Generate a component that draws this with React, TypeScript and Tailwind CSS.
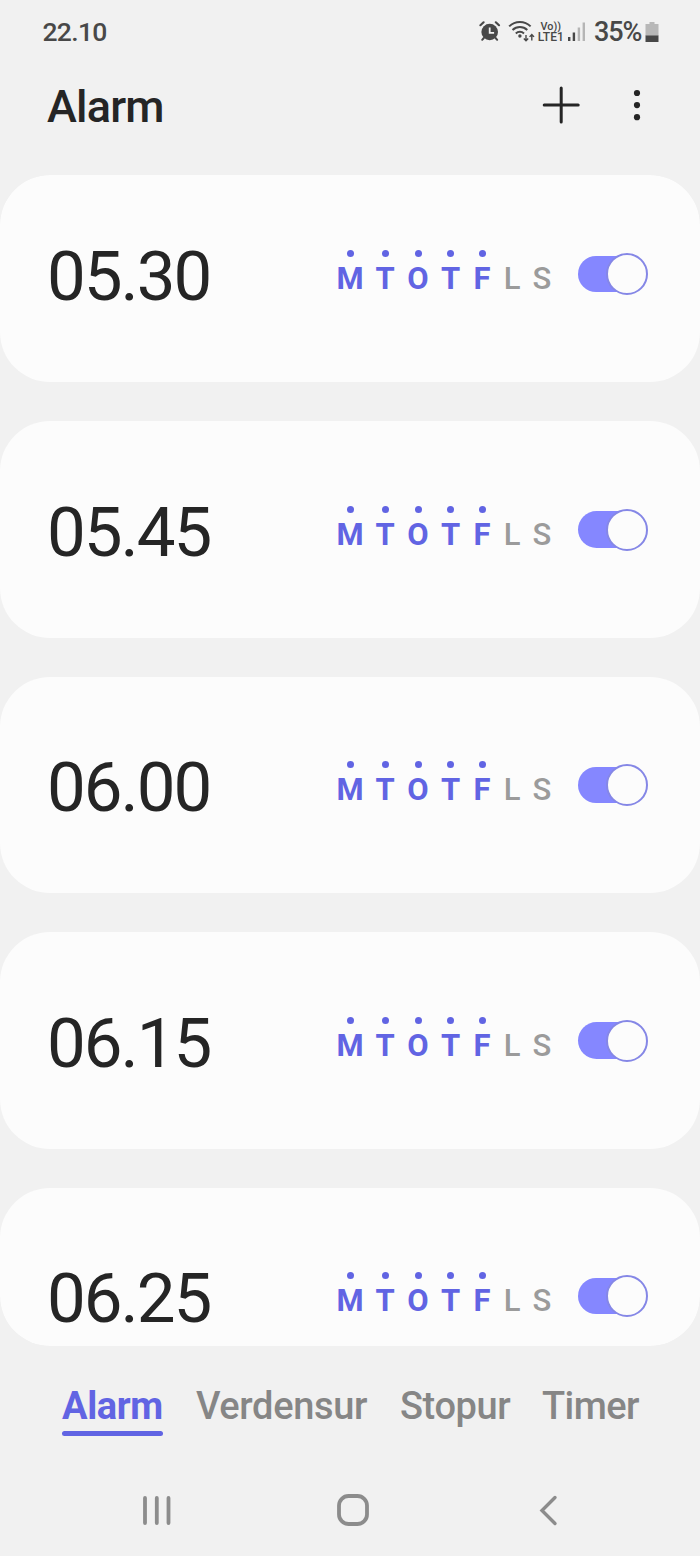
import React from 'react';

const days = [
  { label: 'M', on: true, cell: 'w-[36px]' },
  { label: 'T', on: true, cell: 'w-[34px]' },
  { label: 'O', on: true, cell: 'w-[32px]' },
  { label: 'T', on: true, cell: 'w-[33px]' },
  { label: 'F', on: true, cell: 'w-[30px]' },
  { label: 'L', on: false, cell: 'w-[30px]' },
  { label: 'S', on: false, cell: 'w-[30px]' },
];

const alarms = [
  { time: '05.30', card: 'h-[207px] pt-[70px]' },
  { time: '05.45', card: 'h-[216.5px] pt-[79.5px]' },
  { time: '06.00', card: 'h-[216.5px] pt-[79.5px]' },
  { time: '06.15', card: 'h-[216.5px] pt-[79.5px]' },
  { time: '06.25', card: 'h-[158px] pt-[79.5px]' },
];

function StatusIcons() {
  return (
    <svg width="116" height="24" viewBox="0 0 116 24" fill="none" className="shrink-0">
      <g stroke="#484848" strokeLinecap="round">
        <circle cx="11.7" cy="12" r="8.3" fill="#484848" stroke="none" />
        <path d="M2.4 5.2 5.6 2.3M21 5.2 17.8 2.3" strokeWidth="2.2" />
        <path d="m5.8 18-1.6 1.8M17.6 18l1.6 1.8" strokeWidth="2" />
        <path d="M11.7 7.4v5.4h4.4" stroke="#f1f1f1" strokeWidth="1.8" strokeLinecap="butt" />
      </g>
      <g stroke="#484848" strokeWidth="2">
        <path d="M31.2 6.4c6-5.9 15.4-5.9 21.4 0" />
        <path d="M34.5 10c4.2-4 10.6-4 14.8 0" />
        <path d="M37.8 13.4c2.3-2.1 5.9-2.1 8.2 0" />
      </g>
      <circle cx="41.9" cy="16" r="1.7" fill="#484848" />
      <path d="M48 15v5.6m-2.2-2.2 2.2 2.3 2.2-2.3M53.8 20.4v-5.8m-2.2 2.3 2.2-2.4 2.2 2.4" stroke="#484848" strokeWidth="1.4" />
      <g fill="#484848" fontFamily="Roboto, sans-serif" fontWeight="500">
        <text x="62.5" y="9.8" fontSize="11.5" textLength="20.5" lengthAdjust="spacingAndGlyphs">Vo))</text>
        <text x="59.8" y="21.4" fontSize="12.2" textLength="26" lengthAdjust="spacingAndGlyphs">LTE1</text>
      </g>
      <path d="M91.2 17V21M95.9 12.5V21" stroke="#484848" strokeWidth="2.4" />
      <path d="M100.9 7.5V21M105.8 2.5V21" stroke="#b5b5b5" strokeWidth="2.4" />
    </svg>
  );
}

function Switch() {
  return (
    <div className="mb-[6px] flex h-[42px] w-[70px] items-center">
      <div className="h-[36.5px] w-[49px] shrink-0 rounded-l-full bg-[#8587ff]" />
      <div className="-ml-[21px] size-[42px] shrink-0 rounded-full border-2 border-[#8587e6] bg-[#fcfcfc]" />
    </div>
  );
}

export default function App() {
  return (
    <main
      className="flex h-[1556px] w-[700px] flex-col overflow-hidden bg-[#f1f1f1] text-[#252525]"
      style={{ fontFamily: 'Roboto, sans-serif' }}
    >
      <header className="h-[175px] shrink-0">
        <div className="flex h-[64px] items-center justify-between pr-[41.5px] pl-[42.5px] text-[#484848]">
          <span className="text-[26.5px] leading-none font-medium tracking-[-0.7px]">22.10</span>
          <div className="flex items-center">
            <StatusIcons />
            <span className="w-[48.5px] text-[27px] leading-none font-medium tracking-[-1.1px]">35%</span>
            <svg width="14" height="21" viewBox="0 0 14 21" className="ml-[2px]">
              <path d="M4.5 0h5v2h4v12h-13V2h4Z" fill="#b8b8b8" />
              <path d="M.5 13.5h13V20H.5Z" fill="#484848" />
            </svg>
          </div>
        </div>
        <div className="flex h-[84px] items-center justify-between pr-[58px] pl-[47px]">
          <h1 className="text-[45px] leading-none font-medium tracking-[-0.8px]">Alarm</h1>
          <svg width="100" height="38" viewBox="0 0 100 38" fill="none" className="mb-[2px]">
            <path d="M2.2 19h34M19.2 2v34" stroke="#252525" strokeWidth="3" strokeLinecap="round" />
            <g fill="#252525">
              <circle cx="95" cy="7" r="3.1" />
              <circle cx="95" cy="19.1" r="3.1" />
              <circle cx="95" cy="31.2" r="3.1" />
            </g>
          </svg>
        </div>
      </header>

      <section className="flex h-[1170.5px] shrink-0 flex-col gap-[39px] overflow-hidden rounded-[50px]">
        {alarms.map((alarm) => (
          <article
            key={alarm.time}
            className={`flex shrink-0 items-start rounded-[50px] bg-[#fcfcfc] pr-[52.5px] pl-[47px] ${alarm.card}`}
          >
            <div className="flex w-full items-center">
              <span className="text-[69px] leading-[64px] tracking-[-2px]">{alarm.time}</span>
              <div className="mr-[20.5px] mb-[9px] ml-auto flex">
                {days.map((day, i) => (
                  <div key={i} className={`flex h-[46px] flex-col items-center pt-[0.5px] ${day.cell}`}>
                    <i className={`size-[7px] shrink-0 rounded-full ${day.on ? 'bg-[#6164e3]' : ''}`} />
                    <span
                      className={`mt-[6px] text-[31px] leading-[32px] ${day.on ? 'font-bold text-[#6164e3]' : 'font-medium text-[#9b9b9b]'}`}
                    >
                      {day.label}
                    </span>
                  </div>
                ))}
              </div>
              <Switch />
            </div>
          </article>
        ))}
      </section>

      <nav className="flex h-[118px] shrink-0 items-start pt-[37px] pl-[62px] text-[38px] leading-[46px] font-medium text-[#868686]">
        <div className="w-[134px]">
          <div className="w-[101px] text-[#6164e3]">
            <span className="font-bold tracking-[-0.4px]">Alarm</span>
            <div className="mt-[2px] h-[5px] rounded-full bg-[#6164e3]" />
          </div>
        </div>
        <span className="w-[204px] tracking-[-0.35px]">Verdensur</span>
        <span className="w-[142px] tracking-[-0.4px]">Stopur</span>
        <span className="tracking-[-0.6px]">Timer</span>
      </nav>

      <footer className="flex h-[92px] shrink-0 items-center pl-[142px] text-[#8c8c8c]">
        <svg width="30" height="32" viewBox="0 0 30 32" fill="none" stroke="currentColor" strokeWidth="3.8" strokeLinecap="round">
          <path d="M3 4v25M14.8 4v25M26.5 4v25" />
        </svg>
        <svg width="32" height="32" viewBox="0 0 32 32" fill="none" stroke="currentColor" strokeWidth="3.8" className="ml-[164.5px]">
          <rect x="2" y="2" width="28" height="28" rx="9.5" />
        </svg>
        <svg width="20" height="32" viewBox="0 0 20 32" fill="none" stroke="currentColor" strokeWidth="3.4" strokeLinecap="round" className="ml-[169.5px]">
          <path d="M17 3.5 4 16.5l13 13" />
        </svg>
      </footer>
    </main>
  );
}
